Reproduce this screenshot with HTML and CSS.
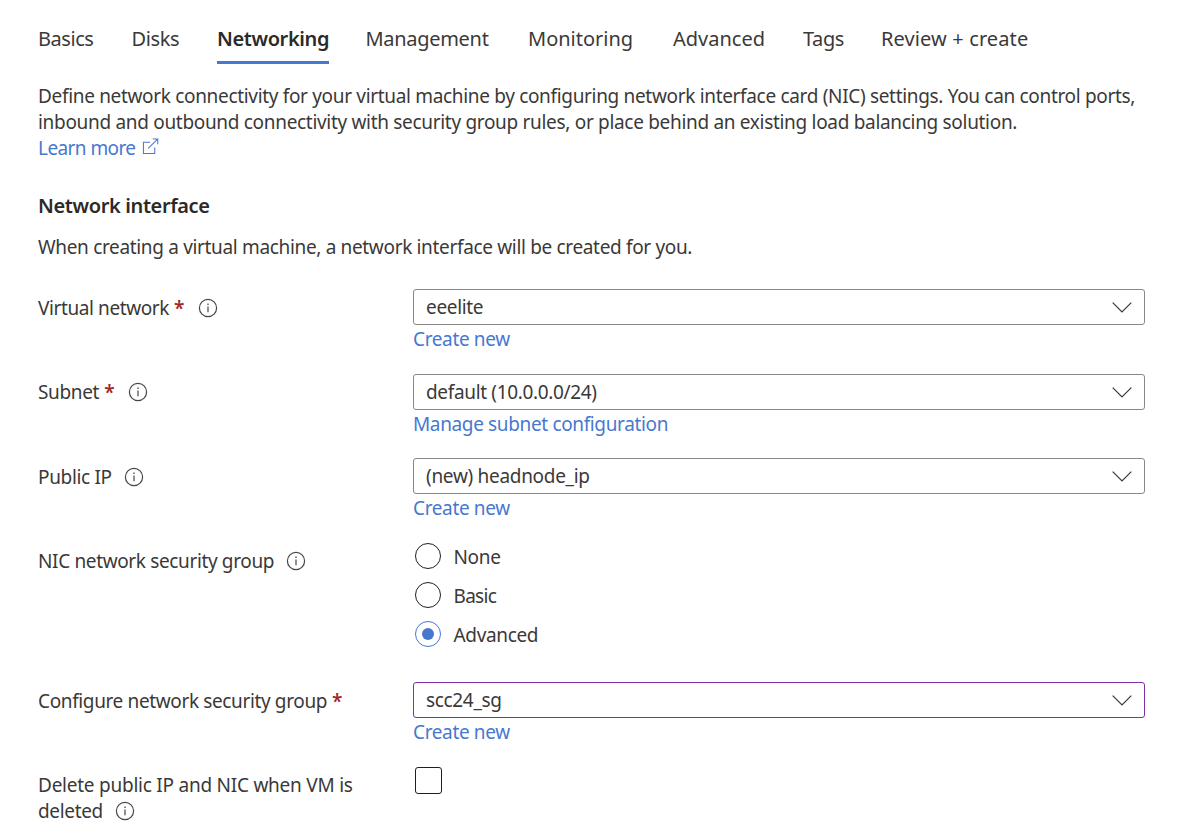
FILE: index.html
```html
<!DOCTYPE html>
<html lang="en">
<head>
<meta charset="utf-8">
<title>Create a virtual machine</title>
<link rel="stylesheet" href="styles.css">
</head>
<body>
<svg class="sprite" width="0" height="0" aria-hidden="true">
  <symbol id="info" viewBox="0 0 20 20"><circle cx="10" cy="10" r="8.6" fill="none" stroke="currentColor" stroke-width="1.2"/><path d="M10 8.6v5.6" stroke="currentColor" stroke-width="1.2"/><path d="M10 5.6v1.5" stroke="currentColor" stroke-width="1.3"/></symbol>
  <symbol id="chevron" viewBox="0 0 20 12"><path d="M.7 1.6 10 10.9 19.3 1.6" fill="none" stroke="currentColor" stroke-width="1.25"/></symbol>
</svg>
<main class="page">
  <nav class="tabs">
    <a class="tab t-basics">Basics</a>
    <a class="tab t-disks">Disks</a>
    <a class="tab active">Networking</a>
    <a class="tab t-management">Management</a>
    <a class="tab t-monitoring">Monitoring</a>
    <a class="tab t-advanced">Advanced</a>
    <a class="tab t-tags">Tags</a>
    <a class="tab t-review">Review + create</a>
  </nav>
  <p class="intro"><span class="i-one">Define network connectivity for your virtual machine by configuring network interface card (NIC) settings. You can control ports,</span><br><span class="i-two">inbound and outbound connectivity with security group rules, or place behind an existing load balancing solution.</span><br><a class="link i-learn">Learn more<svg class="external" viewBox="0 0 18 18"><path d="M8.5 4.5h-7v12h12V10M6.5 11 16.6 1.2M11.3 1.1h5.4v5.4" fill="none" stroke="currentColor" stroke-width="1.1"/></svg></a></p>
  <h2 class="heading">Network interface</h2>
  <p class="note">When creating a virtual machine, a network interface will be created for you.</p>
  <form class="form">
    <div class="label vnet"><span class="l-vnet">Virtual network</span><span class="req">*</span><svg class="info"><use href="#info"/></svg></div>
    <div class="field"><div class="select"><span>eeelite</span><svg class="chevron"><use href="#chevron"/></svg></div><a class="link">Create new</a></div>
    <div class="label subnet"><span class="l-subnet">Subnet</span><span class="req">*</span><svg class="info"><use href="#info"/></svg></div>
    <div class="field"><div class="select"><span>default (10.0.0.0/24)</span><svg class="chevron"><use href="#chevron"/></svg></div><a class="link">Manage subnet configuration</a></div>
    <div class="label"><span>Public IP</span><svg class="info"><use href="#info"/></svg></div>
    <div class="field"><div class="select"><span class="s-ip">(new) headnode_ip</span><svg class="chevron"><use href="#chevron"/></svg></div><a class="link">Create new</a></div>
    <div class="label nsg"><span class="l-nsg">NIC network security group</span><svg class="info"><use href="#info"/></svg></div>
    <div class="field radios">
      <div class="option"><span class="radio"></span><span class="caption">None</span></div>
      <div class="option"><span class="radio"></span><span class="caption o-basic">Basic</span></div>
      <div class="option"><span class="radio checked"></span><span class="caption">Advanced</span></div>
    </div>
    <div class="label"><span class="l-configure">Configure network security group</span><span class="req">*</span></div>
    <div class="field"><div class="select focused"><span>scc24_sg</span><svg class="chevron"><use href="#chevron"/></svg></div><a class="link">Create new</a></div>
    <div class="label two-line"><span class="l-delete">Delete public IP and NIC when VM is</span><div class="line"><span>deleted</span><svg class="info"><use href="#info"/></svg></div></div>
    <div class="field"><span class="checkbox"></span></div>
  </form>
</main>
</body>
</html>
```
FILE: styles.css
```css
* { box-sizing: border-box; }
body {
  margin: 0;
  background: #fff;
  color: #3a3938;
  font: 19px/26px "Noto Sans", "Open Sans", sans-serif;
  overflow: hidden;
}
.sprite { display: none; }
.page { height: 840px; padding: 24px 38px 0; }
p, h2 { margin: 0; white-space: nowrap; }
.tabs {
  display: grid;
  grid-template-columns: 93.5px 85.5px 148.5px 162.5px 145px 130px 78px 180px;
  height: 40px;
  font-size: 20px;
  line-height: 29px;
  white-space: nowrap;
}
.tab { justify-self: start; height: 40px; }
.active { width: 112px; border-bottom: 3px solid #4778d0; color: #2b2a29; font-weight: 600; letter-spacing: -0.4px; }
.t-basics { letter-spacing: -0.45px; }
.t-disks { letter-spacing: -0.35px; }
.t-management { letter-spacing: -0.3px; }
.t-tags { letter-spacing: -0.4px; }
.t-review { letter-spacing: 0.12px; }
.intro { margin-top: 19px; letter-spacing: -0.3px; }
.i-one { letter-spacing: -0.326px; }
.i-two { letter-spacing: -0.312px; }
.i-learn { letter-spacing: -0.58px; }
.link { color: #4778d0; }
.external { width: 17px; height: 17px; margin-left: 6px; vertical-align: 0; }
.heading { margin-top: 32px; color: #2b2a29; font-size: 20px; line-height: 26px; font-weight: 600; letter-spacing: -0.38px; }
.note { margin-top: 15px; letter-spacing: -0.335px; }
.form {
  display: grid;
  grid-template-columns: 375px 732px;
  grid-template-rows: 85px 84px 85px 139px 85px 70px;
  margin-top: 29px;
  letter-spacing: -0.34px;
}
.label { display: flex; align-items: center; height: 26px; margin-top: 6px; white-space: nowrap; }
.subnet, .nsg, .two-line { margin-top: 5px; }
.l-vnet { letter-spacing: -0.4px; }
.l-nsg { letter-spacing: -0.36px; }
.l-configure { letter-spacing: -0.37px; }
.l-delete { letter-spacing: -0.24px; }
.req { margin-left: 5px; color: #a4262c; font-weight: 600; }
.info { width: 20px; height: 20px; margin-left: 12px; color: #484644; }
.vnet .info, .subnet .info { margin-left: 14px; }
.select {
  display: flex;
  align-items: center;
  justify-content: space-between;
  height: 36px;
  padding: 0 12px;
  border: 1px solid #8a8886;
  border-radius: 3px;
}
.s-ip { letter-spacing: -0.3px; }
.select.focused { border-color: #8031a7; }
.chevron { width: 20px; height: 12px; }
.field .link { display: block; width: max-content; margin-top: 1px; letter-spacing: -0.36px; }
.radios { display: grid; grid-auto-rows: 26px; row-gap: 13px; }
.option { display: flex; align-items: center; gap: 12.5px; padding-left: 2px; }
.caption { padding-top: 2px; }
.o-basic { letter-spacing: -0.7px; }
.radio { width: 26px; height: 26px; border: 1px solid #201f1e; border-radius: 50%; }
.radio.checked { display: grid; place-items: center; border-color: #4778d0; }
.radio.checked::after { content: ""; width: 12px; height: 12px; border-radius: 50%; background: #4778d0; }
.two-line { display: block; height: 52px; }
.line { display: flex; align-items: center; }
.checkbox { display: block; width: 27px; height: 27px; margin-left: 2px; border: 1px solid #201f1e; border-radius: 3px; }
```
